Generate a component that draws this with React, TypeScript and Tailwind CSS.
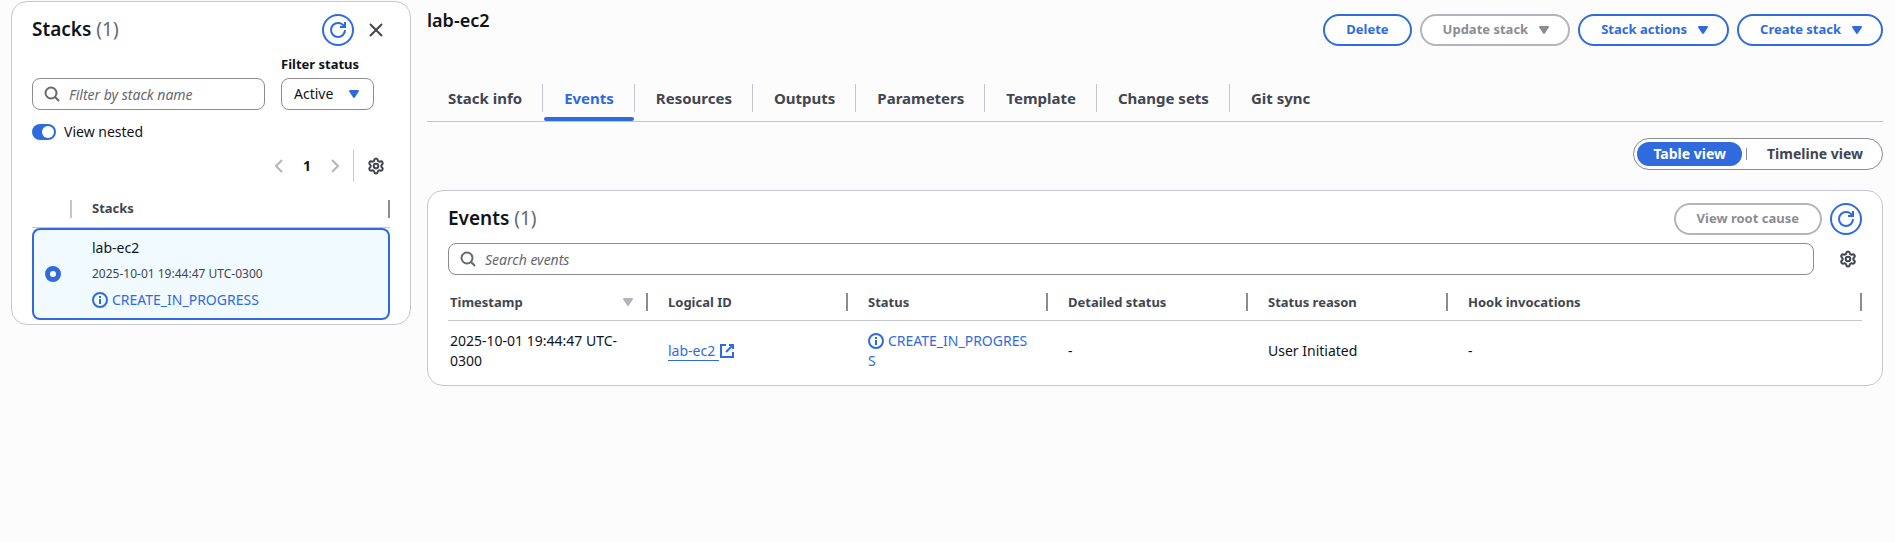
import { useState, type ReactNode } from "react";
import { Settings } from "lucide-react";

function Icon({ children, className = "" }: { children: ReactNode; className?: string }) {
  return (
    <svg
      viewBox="0 0 16 16"
      aria-hidden="true"
      className={`size-4 shrink-0 fill-none stroke-current stroke-2 ${className}`}
    >
      {children}
    </svg>
  );
}

const RefreshIcon = () => (
  <Icon>
    <path d="M15 8c0 3.87-3.13 7-7 7s-7-3.13-7-7 3.13-7 7-7c2.79 0 5.2 1.63 6.33 4" />
    <path d="M10 5h5V0" />
  </Icon>
);

const CaretIcon = ({ className = "" }: { className?: string }) => (
  <Icon className={className}>
    <path d="M4 5h8l-4 6-4-6Z" fill="currentColor" strokeLinejoin="round" />
  </Icon>
);

const SearchIcon = () => (
  <Icon className="pointer-events-none absolute left-3 top-2 text-[#656871]">
    <circle cx="7" cy="7" r="5.5" />
    <path d="m15 15-4.2-4.2" />
  </Icon>
);

const InfoIcon = () => (
  <Icon className="mr-1 inline-block align-[-3px]">
    <circle cx="8" cy="8" r="7" />
    <path d="M8 7v5M8 4v2" />
  </Icon>
);

const ExternalIcon = () => (
  <Icon className="inline-block align-[-3px]">
    <path d="M14 9v5H2V2h5" />
    <path d="M10 2h4v4M7 9l7-7" />
  </Icon>
);

const GearIcon = () => <Settings size={18} strokeWidth={2.7} aria-hidden="true" />;

function PillButton({ children, caret, disabled }: { children: string; caret?: boolean; disabled?: boolean }) {
  return (
    <button
      type="button"
      disabled={disabled}
      className={`flex h-8 items-center gap-2 whitespace-nowrap rounded-full border-2 border-[#306bde] bg-white pl-[21px] text-[13px] font-bold text-[#306bde] disabled:border-[#b4b4bb] disabled:text-[#8c8c94] ${caret ? "pr-4" : "pr-[21px]"}`}
    >
      {children}
      {caret && <CaretIcon />}
    </button>
  );
}

function RefreshButton({ label }: { label: string }) {
  return (
    <button
      type="button"
      aria-label={label}
      className="flex size-8 items-center justify-center rounded-full border-2 border-[#306bde] bg-white text-[#306bde]"
    >
      <RefreshIcon />
    </button>
  );
}

function PanelTitle({ title, count }: { title: string; count: number }) {
  return (
    <h2 className="flex-1 text-[19px] font-semibold leading-[30px]">
      {title} <span className="font-normal text-[#656871]">({count})</span>
    </h2>
  );
}

function StacksPanel() {
  const [nested, setNested] = useState(true);
  return (
    <aside className="mt-px w-[400px] shrink-0 rounded-2xl border border-[#c6c6cd] bg-white px-5 pb-1 pt-3">
      <div className="flex items-start">
        <PanelTitle title="Stacks" count={1} />
        <RefreshButton label="Refresh stacks" />
        <button type="button" aria-label="Close panel" className="ml-3 mr-1 mt-1.5 p-0.5 text-[#424650]">
          <Icon>
            <path d="m2 2 12 12M14 2 2 14" />
          </Icon>
        </button>
      </div>

      <div className="mt-2 flex items-end gap-4">
        <div className="relative w-[233px]">
          <SearchIcon />
          <input
            type="search"
            aria-label="Filter by stack name"
            placeholder="Filter by stack name"
            className="block h-8 w-full rounded-lg border border-[#8c8c94] bg-white pl-9 pr-3 text-sm placeholder:italic placeholder:text-[#656871]"
          />
        </div>
        <div>
          <label htmlFor="status" className="mb-1 block text-[13px] font-bold leading-5">
            Filter status
          </label>
          <div className="relative w-[93px]">
            <select
              id="status"
              className="block h-8 w-full appearance-none rounded-lg border border-[#8c8c94] bg-white pl-3 text-sm"
            >
              <option>Active</option>
            </select>
            <CaretIcon className="pointer-events-none absolute right-3 top-2 text-[#306bde]" />
          </div>
        </div>
      </div>

      <label className="mt-3 flex w-fit items-center gap-2 text-sm leading-5">
        <input
          type="checkbox"
          role="switch"
          checked={nested}
          onChange={(e) => setNested(e.target.checked)}
          className="peer sr-only"
        />
        <span className="flex h-4 w-6 items-center rounded-full bg-[#8c8c94] p-0.5 peer-checked:justify-end peer-checked:bg-[#306bde]">
          <span className="size-3 rounded-full bg-white" />
        </span>
        View nested
      </label>

      <div className="mt-2 flex h-8 items-center justify-end">
        <button type="button" aria-label="Previous page" disabled className="text-[#b4b4bb]">
          <Icon>
            <path d="M11 2 5 8l6 6" />
          </Icon>
        </button>
        <button type="button" className="w-10 text-sm font-bold">
          1
        </button>
        <button type="button" aria-label="Next page" disabled className="text-[#b4b4bb]">
          <Icon>
            <path d="m5 2 6 6-6 6" />
          </Icon>
        </button>
        <span className="ml-2.5 h-8 w-px bg-[#c6c6cd]" />
        <button type="button" aria-label="Stack list preferences" className="ml-[13px] mr-[5px] text-[#424650]">
          <GearIcon />
        </button>
      </div>

      <table className="mt-2 w-full border-separate border-spacing-0 text-left text-sm">
        <thead>
          <tr>
            <th className="h-[38px] w-10 border-b border-[#c6c6cd] p-0">
              <div className="h-[18px] border-r-2 border-[#c6c6cd]" />
            </th>
            <th className="border-b border-[#c6c6cd] p-0">
              <div className="flex h-[18px] items-center border-r-2 border-[#8c8c94] pl-5 text-[13px] font-bold text-[#424650]">
                Stacks
              </div>
            </th>
          </tr>
        </thead>
        <tbody>
          <tr>
            <td className="rounded-l-lg border-2 border-r-0 border-[#306bde] bg-[#f0faff] p-0 pl-[11px]">
              <input
                type="radio"
                name="stack"
                aria-label="lab-ec2"
                defaultChecked
                className="block size-4 appearance-none rounded-full border border-[#8c8c94] bg-white checked:border-5 checked:border-[#306bde]"
              />
            </td>
            <td className="rounded-r-lg border-2 border-l-0 border-[#306bde] bg-[#f0faff] py-2 pl-5 pr-4">
              <div className="leading-5">lab-ec2</div>
              <div className="my-1.5 text-xs leading-5 text-[#424650]">2025-10-01 19:44:47 UTC-0300</div>
              <div className="leading-5 text-[#306bde]">
                <InfoIcon />
                CREATE_IN_PROGRESS
              </div>
            </td>
          </tr>
        </tbody>
      </table>
    </aside>
  );
}

const tabs = ["Stack info", "Events", "Resources", "Outputs", "Parameters", "Template", "Change sets", "Git sync"];

function TabBar() {
  return (
    <div role="tablist" className="mt-[34px] flex border-b border-[#c6c6cd]">
      {tabs.map((name) => {
        const active = name === "Events";
        return (
          <div key={name} className="group relative flex h-[41px] items-start">
            <button
              type="button"
              role="tab"
              aria-selected={active}
              className="h-9 whitespace-nowrap pl-[21px] pr-5 text-[15px] font-bold text-[#424650] aria-selected:text-[#306bde]"
            >
              {name}
            </button>
            <span className="mt-1 h-7 w-px bg-[#c6c6cd] group-last:hidden" />
            {active && <span className="absolute inset-x-px bottom-0 h-1 rounded-full bg-[#306bde]" />}
          </div>
        );
      })}
    </div>
  );
}

const columns = ["Timestamp", "Logical ID", "Status", "Detailed status", "Status reason", "Hook invocations"];

function EventsCard() {
  return (
    <section className="mt-5 rounded-2xl border border-[#c6c6cd] bg-white px-5 pb-1 pt-3">
      <div className="flex items-start gap-2">
        <PanelTitle title="Events" count={1} />
        <PillButton disabled>View root cause</PillButton>
        <RefreshButton label="Refresh events" />
      </div>
      <div className="mt-2 flex items-center">
        <div className="relative flex-1">
          <SearchIcon />
          <input
            type="search"
            aria-label="Search events"
            placeholder="Search events"
            className="block h-8 w-full rounded-lg border border-[#8c8c94] bg-white pl-9 pr-3 text-sm placeholder:italic placeholder:text-[#656871]"
          />
        </div>
        <button type="button" aria-label="Events table preferences" className="ml-[25px] mr-[5px] text-[#424650]">
          <GearIcon />
        </button>
      </div>
      <table className="mt-2 w-full table-fixed border-separate border-spacing-0 text-left text-sm leading-5">
        <thead>
          <tr>
            {columns.map((name, i) => (
              <th key={name} className="h-[38px] w-[200px] border-b border-[#c6c6cd] p-0 last:w-auto">
                <div
                  className={`flex h-[18px] items-center justify-between border-r-2 border-[#8c8c94] pr-2.5 text-[13px] font-bold text-[#424650] ${i === 0 ? "pl-0.5" : "pl-5"}`}
                >
                  {name}
                  {i === 0 && <CaretIcon className="text-[#b4b4bb]" />}
                </div>
              </th>
            ))}
          </tr>
        </thead>
        <tbody>
          <tr>
            <td className="py-2.5 pl-0.5 pr-5">2025-10-01 19:44:47 UTC-0300</td>
            <td className="py-2.5 pl-5 pr-5 text-[#306bde]">
              <a href="#lab-ec2" className="whitespace-nowrap">
                <span className="border-b border-[#306bde] pr-1">lab-ec2</span>
                <ExternalIcon />
              </a>
            </td>
            <td className="break-all py-2.5 pl-5 pr-5 text-[#306bde]">
              <InfoIcon />
              CREATE_IN_PROGRESS
            </td>
            <td className="py-2.5 pl-5 pr-5">-</td>
            <td className="py-2.5 pl-5 pr-5">User Initiated</td>
            <td className="py-2.5 pl-5 pr-5">-</td>
          </tr>
        </tbody>
      </table>
    </section>
  );
}

export default function App() {
  return (
    <div className="flex min-h-screen items-start gap-4 bg-[#fcfcfc] pl-[11px] pr-3 font-['Noto_Sans',sans-serif] text-[#0f141a]">
      <StacksPanel />
      <main className="min-w-0 flex-1">
        <div className="flex items-start justify-between">
          <h1 className="pt-2 text-lg font-semibold leading-6">lab-ec2</h1>
          <div className="flex gap-2 pt-3.5">
            <PillButton>Delete</PillButton>
            <PillButton caret disabled>Update stack</PillButton>
            <PillButton caret>Stack actions</PillButton>
            <PillButton caret>Create stack</PillButton>
          </div>
        </div>
        <TabBar />
        <div className="mt-4 flex justify-end">
          <div className="flex h-8 items-center rounded-full border border-[#8c8c94] bg-white px-[3px] text-sm font-bold">
            <button type="button" aria-pressed="true" className="h-6 rounded-full bg-[#306bde] px-4 text-white">
              Table view
            </button>
            <span className="ml-1 h-3 w-px bg-[#8c8c94]" />
            <button type="button" aria-pressed="false" className="h-6 pl-5 pr-4 text-[#424650]">
              Timeline view
            </button>
          </div>
        </div>
        <EventsCard />
      </main>
    </div>
  );
}
